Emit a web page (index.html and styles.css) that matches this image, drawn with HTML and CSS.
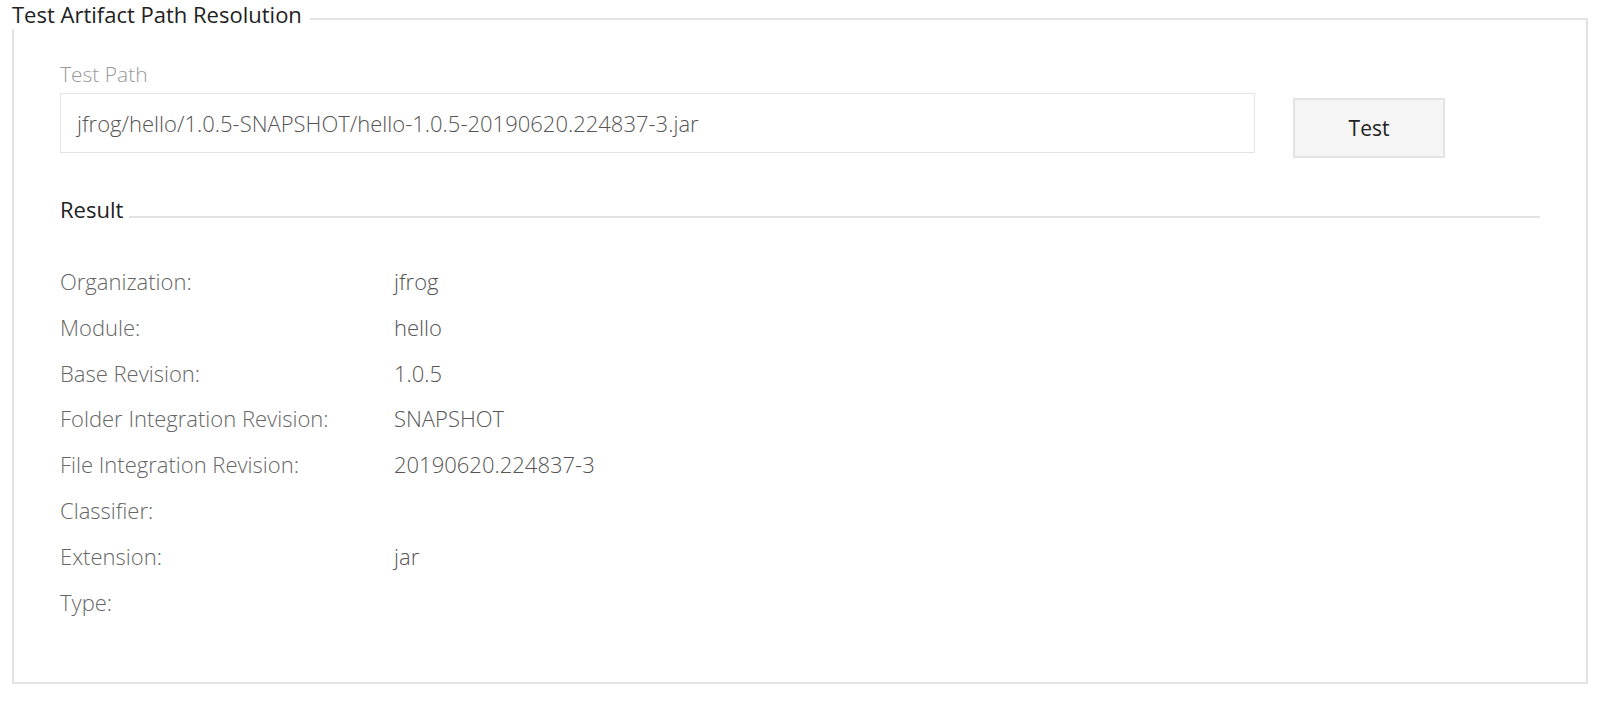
FILE: index.html
```
<!DOCTYPE html>
<html>
<head>
<meta charset="utf-8">
<link rel="stylesheet" href="styles.css">
</head>
<body>
<div class="panel">
  <div class="legend">Test Artifact Path Resolution</div>
  <div class="form-row">
    <div class="field">
      <label class="field-label">Test Path</label>
      <div class="input">jfrog/hello/1.0.5-SNAPSHOT/hello-1.0.5-20190620.224837-3.jar</div>
    </div>
    <button class="btn">Test</button>
  </div>
  <div class="result-head">
    <span class="result-title">Result</span>
    <span class="result-line"></span>
  </div>
  <div class="rows">
    <div class="k">Organization:</div><div class="v">jfrog</div>
    <div class="k">Module:</div><div class="v">hello</div>
    <div class="k">Base Revision:</div><div class="v">1.0.5</div>
    <div class="k">Folder Integration Revision:</div><div class="v">SNAPSHOT</div>
    <div class="k">File Integration Revision:</div><div class="v">20190620.224837-3</div>
    <div class="k">Classifier:</div><div class="v"></div>
    <div class="k">Extension:</div><div class="v">jar</div>
    <div class="k">Type:</div><div class="v"></div>
  </div>
</div>
</body>
</html>
```
FILE: styles.css
```
html, body {
  margin: 0;
  padding: 0;
  background: #fff;
  font-family: "Open Sans", "Liberation Sans", sans-serif;
}
.panel {
  position: relative;
  margin: 18px 12px 0 12px;
  height: 666px;
  box-sizing: border-box;
  border: 2px solid #e3e3e3;
  padding: 41px 46px 0 46px;
}
.legend {
  position: absolute;
  left: -14px;
  top: -21px;
  background: #fff;
  padding: 0 8px 0 12px;
  font-size: 22px;
  line-height: 30px;
  color: #222;
}
.form-row {
  display: flex;
  align-items: flex-start;
  gap: 38px;
}
.field {
  display: flex;
  flex-direction: column;
  width: 1195px;
}
.field-label {
  font-size: 21px;
  font-weight: 300;
  line-height: 26px;
  color: #999;
  margin-bottom: 6px;
}
.input {
  height: 60px;
  box-sizing: border-box;
  border: 1px solid #e3e3e3;
  padding: 0 16px;
  display: flex;
  align-items: center;
  font-size: 22px;
  font-weight: 300;
  color: #555;
}
.btn {
  margin-top: 37px;
  width: 152px;
  height: 60px;
  background: #f5f5f5;
  border: 2px solid #e3e3e3;
  font-family: inherit;
  font-size: 21px;
  color: #222;
  padding: 0;
}
.result-head {
  display: flex;
  align-items: flex-end;
  margin-top: 36px;
}
.result-title {
  font-size: 22px;
  line-height: 30px;
  color: #222;
  margin-right: 6px;
}
.result-line {
  flex: 1;
  height: 2px;
  background: #e3e3e3;
  margin-bottom: 6px;
}
.rows {
  display: grid;
  grid-template-columns: 334px 1fr;
  grid-auto-rows: 45.8px;
  margin-top: 35px;
  font-size: 22px;
  font-weight: 300;
  line-height: 45.8px;
}
.k { color: #666; }
.v { color: #555; }
```
